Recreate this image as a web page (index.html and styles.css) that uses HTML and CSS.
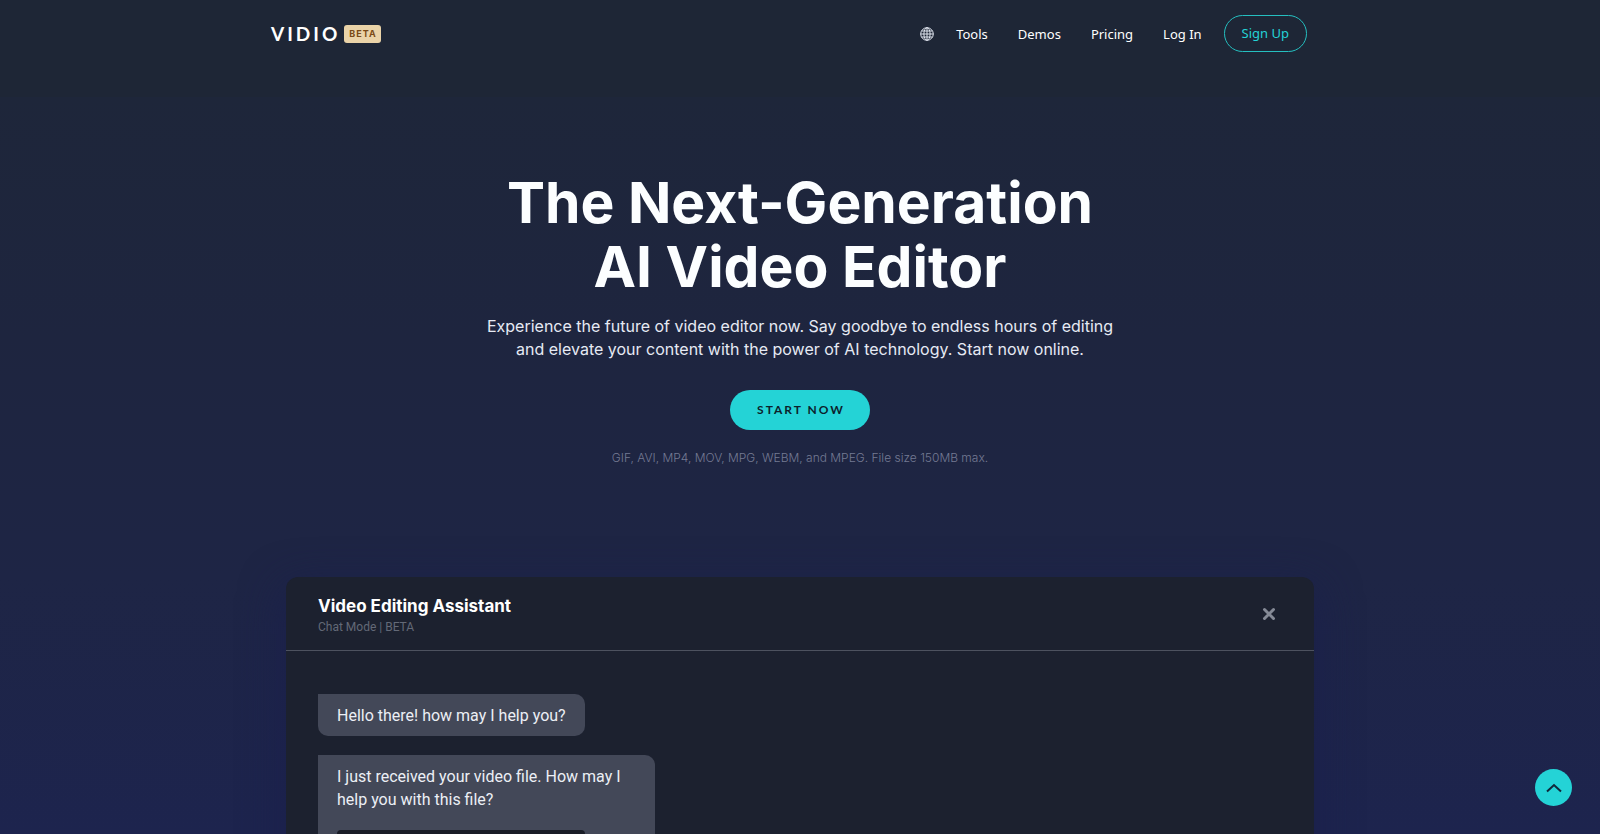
FILE: index.html
```html
<!DOCTYPE html>
<html lang="en">
<head>
<meta charset="utf-8">
<meta name="viewport" content="width=device-width, initial-scale=1">
<title>Vidio</title>
<link rel="stylesheet" href="styles.css">
</head>
<body>
<header class="site-header">
  <div class="header-inner">
    <a class="brand" href="#">VIDIO</a>
    <span class="beta">BETA</span>
    <nav class="nav" aria-label="Main">
      <button class="globe" type="button" aria-label="Language">
        <svg viewBox="0 0 14 14" width="14" height="14" fill="none" stroke="currentColor" stroke-width="1">
          <circle cx="7" cy="7" r="6.3"/><ellipse cx="7" cy="7" rx="3.1" ry="6.3"/>
          <path d="M7 .7v12.6M.7 7h12.6M1.5 4h11M1.5 10h11"/>
        </svg>
      </button>
      <a class="nav-link" href="#">Tools</a>
      <a class="nav-link" href="#">Demos</a>
      <a class="nav-link" href="#">Pricing</a>
      <a class="nav-link" href="#">Log In</a>
      <a class="sign-up" href="#">Sign Up</a>
    </nav>
  </div>
</header>
<main class="main">
  <section class="hero">
    <h1 class="title">The Next-Generation<br>AI Video Editor</h1>
    <p class="lead">Experience the future of video editor now. Say goodbye to endless hours of editing<br>and elevate your content with the power of AI technology. Start now online.</p>
    <button class="start" type="button">START NOW</button>
    <p class="formats">GIF, AVI, MP4, MOV, MPG, WEBM, and MPEG. File size 150MB max.</p>
  </section>
  <section class="chat">
    <header class="chat-head">
      <div>
        <h2 class="chat-title">Video Editing Assistant</h2>
        <p class="chat-mode">Chat Mode | BETA</p>
      </div>
      <button class="close" type="button" aria-label="Close">
        <svg viewBox="0 0 14 14" width="14" height="14" fill="none" stroke="currentColor" stroke-width="3" stroke-linecap="round"><path d="M2.5 2.5l9 9M11.5 2.5l-9 9"/></svg>
      </button>
    </header>
    <div class="messages">
      <p class="bubble">Hello there! how may I help you?</p>
      <div class="bubble bubble-file">
        <p class="bubble-text">I just received your video file. How may I help you with this file?</p>
        <div class="video"></div>
      </div>
    </div>
  </section>
</main>
<button class="to-top" type="button" aria-label="Back to top">
  <svg viewBox="0 0 16 10" width="16" height="10" fill="none" stroke="currentColor" stroke-width="2"><path d="M1 8.5l7-6.5 7 6.5"/></svg>
</button>
</body>
</html>
```
FILE: styles.css
```css
* { box-sizing: border-box; }
body {
  margin: 0;
  height: 100vh;
  overflow: hidden;
  display: flex;
  flex-direction: column;
  background: #1d244b;
  color: #fff;
  font-family: Inter, "Liberation Sans", sans-serif;
}
h1, h2, p { margin: 0; }
a { text-decoration: none; color: inherit; }
button { border: 0; padding: 0; background: none; font-family: inherit; color: inherit; cursor: pointer; }
svg { display: block; }

.site-header { flex: none; height: 97px; padding: 15px 24px 0; background: #1e2636; }
.header-inner { display: flex; align-items: center; max-width: 1058px; height: 37px; margin: 0 auto; padding-right: 22px; }
.brand { font: 700 19px/24px Lato, sans-serif; letter-spacing: 3px; }
.beta {
  margin-left: 4px;
  padding: 0 4px 0 5px;
  border-radius: 3px;
  background: #ead3a8;
  color: #7a4a16;
  font: 700 9px/18px Inter, sans-serif;
  letter-spacing: 1px;
}
.nav { display: flex; align-items: center; margin-left: auto; gap: 30px; font: 400 13px/20px "Noto Sans", sans-serif; }
.globe { color: #dfe4ee; margin-right: -8px; }
.sign-up {
  margin-left: -8px;
  padding: 0 17px;
  border: 1px solid #25bfc0;
  border-radius: 19px;
  color: #24d3d6;
  line-height: 35px;
}

.main {
  flex: 1 0 auto;
  padding: 74px 24px 0;
  background: linear-gradient(#1e263a 0, #1e253f 240px, #1e2545 480px, #1d244e 737px);
}
.hero { display: flex; flex-direction: column; align-items: center; text-align: center; }
.title { font-size: 57px; line-height: 64px; font-weight: 700; color: #fcfeff; }
.lead { margin-top: 16px; font-size: 16px; line-height: 23px; font-weight: 400; color: #e6eaf4; }
.start {
  margin-top: 29px;
  padding: 0 25px 0 27px;
  border-radius: 20px;
  background: #24d3d6;
  color: #0c1f2c;
  font: 700 12px/40px Lato, sans-serif;
  letter-spacing: 2px;
}
.formats { margin-top: 18px; font-size: 12px; line-height: 20px; font-weight: 300; color: #747a93; }

.chat {
  max-width: 1028px;
  min-height: 600px;
  margin: 109px auto 0;
  border-radius: 12px;
  background: #1c212f;
  box-shadow: 0 12px 40px 4px rgba(26, 31, 76, .8);
}
.chat-head {
  display: flex;
  justify-content: space-between;
  align-items: center;
  height: 74px;
  padding: 0 38px 0 32px;
  border-bottom: 1px solid #4d525f;
}
.chat-title { padding-top: 2px; font-size: 17px; line-height: 24px; font-weight: 700; }
.chat-mode { font: 400 12px/18px Roboto, sans-serif; color: #636977; }
.close { color: #858a96; }
.messages { display: flex; flex-direction: column; align-items: flex-start; gap: 19px; padding: 43px 32px; }
.bubble { padding: 10px 19px 9px; border-radius: 0 10px 10px 10px; background: #434858; font: 400 16px/23px Roboto, sans-serif; color: #eceff5; }
.bubble-file { width: 337px; }
.video { width: 248px; height: 140px; margin-top: 19px; border-radius: 4px; background: #191c26; }

.to-top {
  position: fixed;
  right: 28px;
  bottom: 28px;
  display: grid;
  place-items: center;
  width: 37px;
  height: 37px;
  border-radius: 50%;
  background: #24d3d6;
  color: #10283a;
}
```
